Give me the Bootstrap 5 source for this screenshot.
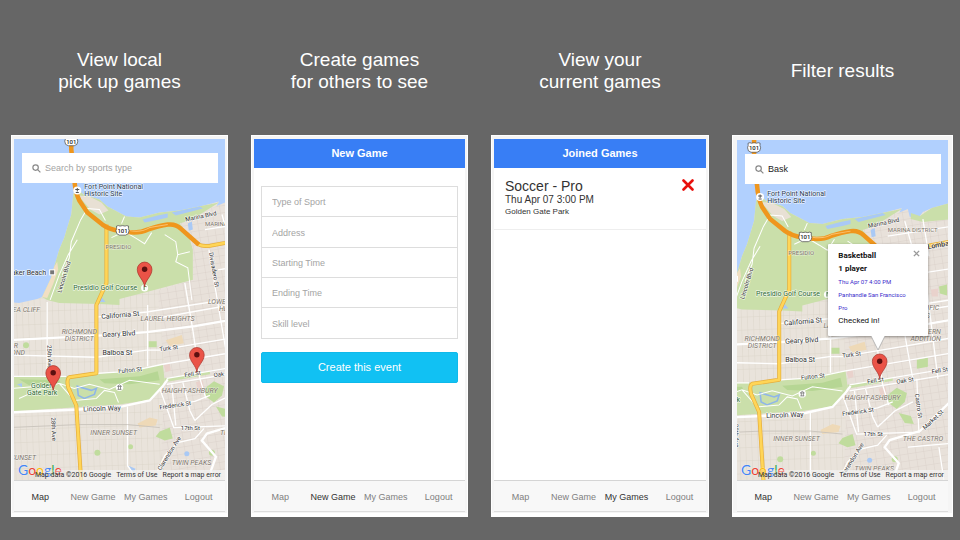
<!DOCTYPE html>
<html lang="en">
<head>
<meta charset="utf-8">
<meta name="viewport" content="width=device-width, initial-scale=1">
<title>Pick up games</title>
<link href="https://cdn.jsdelivr.net/npm/bootstrap@5.3.0/dist/css/bootstrap.min.css" rel="stylesheet">
<style>
  body { background: #666; font-family: "Liberation Sans", Arial, sans-serif; }
  a { text-decoration: none; }
  .showcase { display: grid; grid-template-columns: 217fr 217fr 218fr 221fr; gap: 0 23px; min-height: 100vh; padding: 7px 7px 23px 11px; }
  .caption { height: 128px; font-size: 19px; line-height: 22px; color: #fff; margin: 0; font-weight: 400; }
  .phone { background: #f5f5f5; border: 1px solid #fff; border-bottom-width: 4px; padding: 3px 2px 1px; }
  .phone-wide { padding: 4px; padding-bottom: 1px; }
  .screen { background: #fff; }
  .topbar { background: #387ef5; color: #fff; font-size: 11px; line-height: 29px; font-weight: 700; margin: 0; }
  .tabs { background: #f8f8f8; border-top: 1px solid #d5d5d5; border-bottom: 1px solid #ddd; height: 32px; padding-top: 3px; font-size: 9px; }
  .tabs a { color: #808080; flex: 1 1 0; text-align: center; white-space: nowrap; }
  .tabs a.current { color: #333; }
  .map-area { background: #b1d0fe; }
  .map-canvas { inset: 0; font-family: Roboto, sans-serif; }
  .search-box { top: 14px; left: 8px; right: 7px; height: 30px; background: #fff; padding: 0 10px; gap: 4px; z-index: 2; }
  .search-box input { border: 0; outline: 0; background: transparent; font-size: 9px; line-height: 12px; color: #222; padding: 0; min-width: 0; }
  ::placeholder { color: #a4a4a4 !important; opacity: 1; }
  .map-credit { right: 0; bottom: 0; left: 20px; font: 7px/10px Roboto, sans-serif; padding-right: 4px; z-index: 2; background: linear-gradient(90deg, rgba(245,245,245,0), rgba(245,245,245,.7) 50px); gap: 5px; }
  .map-credit, .map-credit a { color: #333; white-space: nowrap; }
  .g-logo { left: 4px; bottom: 2px; font: 14px/16px Lato, sans-serif; z-index: 1; text-shadow: 0 0 1px #fff; }
  .bubble { left: 67%; top: 104px; width: 100px; margin-left: -50px; background: #fff; border-radius: 1px; box-shadow: 0 1px 3px rgba(0,0,0,.4); padding: 5px 10px 9px; font: 8px/13px Roboto, sans-serif; color: #111; z-index: 3; }
  .bubble small { display: block; font-size: 6px; line-height: 13px; color: #3a2ccc; white-space: nowrap; }
  .bubble .tail { left: 43px; top: 100%; }
  .bubble button { top: 6px; right: 8px; padding: 0; border: 0; background: none; line-height: 0; }
  .game-form { padding: 18px 7px 0; }
  .fields { border: 1px solid #ddd; min-height: 153px; margin-bottom: 13px; }
  .fields input { border: 0; border-bottom: 1px solid #ddd; flex: 1 1 0; font-size: 9px; padding: 3px 10px 0; width: 100%; outline: 0; background: #fff; min-height: 30px; border-radius: 0; }
  .fields input:last-child { border-bottom: 0; }
  .btn-create { background: #11c1f3; color: #fff; font-size: 11px; line-height: 13px; padding: 8px; border: 1px solid #0fb9ea; border-radius: 2px; }
  .game { padding: 11px 11px 11px; border-bottom: 1px solid #eee; color: #333; }
  .game h3 { font-size: 14px; line-height: 15px; margin: 0; font-weight: 400; }
  .game p { font-size: 10px; line-height: 12px; margin: 0; }
  .game address { font-size: 8px; line-height: 12px; margin: 0; }
  .game button { border: 0; background: none; padding: 0; line-height: 0; }
</style>
<script src="https://cdn.jsdelivr.net/npm/bootstrap@5.3.0/dist/js/bootstrap.bundle.min.js"></script>
</head>
<body>
<svg width="0" height="0" class="position-absolute" aria-hidden="true">
  <defs>
    <pattern id="blocks" width="6" height="13" patternUnits="userSpaceOnUse" patternTransform="rotate(-2)">
      <rect width="6" height="13" fill="#e9e3db"/>
      <path d="M0 0V13M0 0H6" stroke="#d9d1c7" stroke-width=".8" fill="none"/>
    </pattern>
    <pattern id="blocksEast" width="8" height="7" patternUnits="userSpaceOnUse" patternTransform="rotate(-9)">
      <rect width="8" height="7" fill="#e8e1da"/>
      <path d="M0 0V7M0 0H8" stroke="#d9d0c8" stroke-width=".8" fill="none"/>
    </pattern>
    <g id="pin">
      <path d="M0 0C-.6-7-7.300-10.500-7.300-17.400A7.300 7.300 0 0 1 7.300-17.400C7.300-10.500 .6-7 0 0Z" fill="#ea5347" stroke="#a8332b" stroke-width=".7"/>
      <circle cy="-17.500" r="2.700" fill="#5c1010"/>
    </g>
    <g id="shield">
      <path d="M-6-4.500Q-4-5.500-2.500-4.500Q0-5.500 2.500-4.500Q4-5.500 6-4.500Q5.500-2 6.500 0Q6.500 4 3 4.500H-3Q-6.500 4-6.500 0Q-5.500-2-6-4.500Z" fill="#fff" stroke="#444" stroke-width=".7"/>
      <text y="2.300" text-anchor="middle" font-size="6" font-weight="500" fill="#222">101</text>
    </g>
    <g id="city">
      <path fill="url(#blocks)" d="M10 302L20 303L38 299L43 297L52 278L55 267L60 250L65 238L72 215L74 195L77 188L84 195L100 200L108 207L127 217L140 218L160 213L180 211L204 206L219 202L216 208L227 211L237 210L240 206L249 202L252 206L270 196V490H10Z"/>
      <path fill="url(#blocksEast)" d="M180 222L225 203L227 211L237 210L249 202L270 196V490H160L165 372L163 345L158 291L193 280V250Z"/>
      <path fill="#cadfaa" d="M48 300L43 297L52 278L55 267L60 250L65 238L72 215L74 195L77 188L84 195L100 200L108 207L127 217L140 218L160 213L180 211L204 206L219 203L192 220L180 224L189 236L193 250V280L147 292L120 299V305L100 304L60 303Z"/>
      <path fill="#e8e0d4" d="M79 196L90 197L102 203L109 211L100 215L91 210Z"/>
      <path fill="#f1dfc3" d="M43 297L52 278L55 267L58 262L59 270L54 284L48 298Z"/>
      <path fill="#cadfaa" d="M228 207L237 210L249 202L270 196V213L240 216L228 213Z"/>
      <path fill="#cadfaa" d="M10 376L67 376L97 374L130 370L163 364L165 380L161 389L152 399L120 404L10 411Z"/>
      <path fill="#cadfaa" d="M165 378L210 371V374L165 382Z"/>
      <path fill="#b6d694" d="M20 379L60 380L62 384L30 385ZM100 379L140 376L158 371L160 380L130 384L105 383Z"/>
      <g fill="#c0dc9d">
        <path d="M205 388L214 381L224 386L222 395L214 402L206 396Z"/>
        <path d="M216 406L228 409L231 417L222 416Z"/>
        <path d="M156 436L160 431L170 427L173 438L165 440Z"/>
        <path d="M149 341H157V347H149ZM234 353L245 351V360L234 362ZM256 280L264 278V289L257 287Z"/>
        <circle cx="98" cy="452" r="3"/><circle cx="131" cy="446" r="2.500"/><circle cx="27" cy="345" r="3"/><circle cx="212" cy="452" r="3"/>
      </g>
      <path fill="#eed9b7" d="M138 423L150 417L158 419L156 425L140 427ZM166 340L182 335L184 343L170 346Z"/>
      <path fill="#e9d2cc" d="M196 382L203 380L204 388L198 389ZM248 283L255 282V290L249 290ZM164 365L170 363L171 370L166 372Z"/>
      <g fill="#a9c9f5">
        <path d="M143 220L158 216L168 214V218L160 220L145 223ZM188 224L192 222L193 230L189 231ZM172 213L200 207L203 209L176 216ZM100 302L102 297L106 302ZM18 384L23 383V387Z"/>
        <circle cx="187" cy="453" r="2.500"/>
        <path d="M129 465L136 468L134 472Z"/>
      </g>
      <path d="M78 386L92 390L97 388L95 394L85 398L79 395Z" fill="none" stroke="#8fb6e8" stroke-width="1.600"/>
      <!-- park trails and minor roads -->
      <g fill="none" stroke="#fff" stroke-width="1">
        <path d="M78 240L69 255L60 275L51 300M81 221L72 242L70 258L63 275M81 221L88 209L100 210L106 221M112 238L125 232L137 239L145 244L152 233M125 217L122 224M165 235L176 242L178 255L190 252M178 255L176 262L188 268L192 300"/>
        <path d="M20 398L38 390L60 383L75 388L90 384L110 389L130 380L160 384M15 388L40 386M97 398L105 390L115 392L119 402M60 383L75 400L97 398"/>
      </g>
      <g fill="none" stroke="#fff" stroke-width="1.300">
        <path d="M97 317L147 312L270 293M147 320L225 306L270 299M15 355L97 357L147 350L160 350L225 339L270 331M15 376L67 376M97 373L130 371L163 364L270 346M167 378L270 361M167 384L270 367"/>
        <path d="M48 302V374M148 305V366M185 283L193 330L200 378L206 398M209 250L216 292L225 345L230 372M240 250L255 372M128 406V465L140 482M160 388L174 427L237 425M172 384L176 425M183 382L190 410L195 420M160 407L195 401L210 395M195 420L212 404L230 395M234 372L236 425"/>
        <path d="M158 470L165 455L178 442L195 438L204 428M218 270L270 262M205 230L270 220M222 215L232 250M240 213L246 250M256 440L262 480M225 440L270 436"/>
      </g>
      <path d="M10 427L80 424L128 424L160 427" fill="none" stroke="#c9c3bb" stroke-width=".9"/>
      <g fill="none" stroke="#fff" stroke-width="2.300">
        <path d="M10 340L107 335L147 332L195 326L270 313M10 412L80 409L123 406L150 400L163 386L168 379"/>
        <path d="M270 392L237 424L207 433L202 440L216 456L211 470L216 484"/>
      </g>
      <g fill="none" stroke-linejoin="round">
        <path d="M107 225V283L97 305V373L70 377Q67 379 69 387L77 405L80 452L82 484M198 244Q201 247 210 246L270 235" stroke="#e6ae3c" stroke-width="4"/>
        <path d="M107 225V283L97 305V373L70 377Q67 379 69 387L77 405L80 452L82 484M198 244Q201 247 210 246L270 235" stroke="#ffd557" stroke-width="2.600"/>
        <path d="M72 130V150L75 180Q76 193 80 201L88 213L103 225Q110 230 120 231Q138 235 148 230Q160 226 168 225Q176 224 181 229L199 245" stroke="#ef961d" stroke-width="4.500"/>
        <path d="M130 231Q142 233 150 228L168 225" stroke="#fbc170" stroke-width="1"/>
      </g>
      <use href="#shield" x="72" y="142"/>
      <use href="#shield" x="123" y="231"/>
      <circle cx="78" cy="191" r="4" fill="#fff"/><path d="M76 190H80M76.500 193H79.500M78 188.500V192" stroke="#555" stroke-width="1"/>
      <rect x="50.500" y="270" width="5" height="5" fill="#777" stroke="#fff"/>
      <circle cx="145" cy="288" r="3.500" fill="#fff"/><path d="M144.500 290V286L147 287" stroke="#5a8d55" stroke-width="1" fill="none"/>
      <circle cx="120" cy="387" r="3.700" fill="#fff"/><path d="M118 389H122M118 386H122L120 384.500ZM119 386V389M121 386V389" stroke="#666" stroke-width=".7" fill="none"/>
      <g font-size="6" fill="#333" stroke="#fff" stroke-width="1.400" stroke-opacity=".7" stroke-linejoin="round" paint-order="stroke">
        <g font-size="7" fill="#2d3d55"><text x="85" y="190">Fort Point National</text><text x="85" y="197">Historic Site</text></g>
        <text x="47" y="275" text-anchor="end" font-size="7">Baker Beach</text>
        <text x="74" y="290" font-size="7" fill="#2f6b35">Presidio Golf Course</text>
        <g font-size="7" fill="#2f6b35" text-anchor="middle"><text x="43" y="388">Golden</text><text x="43" y="395">Gate Park</text></g>
        <text transform="translate(186 222) rotate(-12)">Marina Blvd</text>
        <text transform="translate(245 243) rotate(-10)" font-weight="500" font-size="7">Lombard St</text>
        <text transform="translate(62 293) rotate(-73)">Lincoln Blvd</text>
        <text transform="translate(102 319) rotate(-5)" font-size="7">California St</text>
        <text transform="translate(103 337) rotate(-3)" font-size="7">Geary Blvd</text>
        <text transform="translate(103 355)" font-size="7">Balboa St</text>
        <text transform="translate(160 351) rotate(-7)">Turk St</text>
        <text transform="translate(119 373) rotate(-6)">Fulton St</text>
        <text transform="translate(185 377) rotate(-9)">Fell St</text>
        <text transform="translate(214 377) rotate(-9)">Oak St</text>
        <text transform="translate(249 367) rotate(-9)">Fell St</text>
        <text transform="translate(209 253) rotate(80)">Divisadero St</text>
        <text transform="translate(48 345) rotate(88)">25th Ave</text>
        <text transform="translate(52 417) rotate(88)">28th Ave</text>
        <text transform="translate(84 411) rotate(-2)" font-size="7">Lincoln Way</text>
        <text transform="translate(160 409) rotate(-8)">Frederick St</text>
        <text x="181" y="429">17th St</text>
        <text transform="translate(161 470) rotate(-58)">Clarendon Ave</text>
        <text transform="translate(232 387) rotate(82)">Castro St</text>
        <text transform="translate(242 423) rotate(-43)">Market St</text>
      </g>
      <g font-size="6" fill="#7d756b" stroke="#fff" stroke-width="1" stroke-opacity=".5" paint-order="stroke">
        <text x="205" y="226">MARINA DISTRICT</text><text x="106" y="249">PRESIDIO</text>
        <g font-style="italic" font-size="7">
          <text x="41" y="312" text-anchor="end">SEA CLIFF</text>
          <text x="80" y="334" text-anchor="middle">RICHMOND</text><text x="80" y="341" text-anchor="middle">DISTRICT</text>
          <text x="141" y="321">LAUREL HEIGHTS</text>
          <text x="208" y="304">LOWER PACIFIC</text><text x="219" y="311">HEIGHTS</text>
          <text x="258" y="327" text-anchor="end">WESTERN</text><text x="258" y="334" text-anchor="end">ADDITION</text>
          <text x="19" y="348" text-anchor="end">OUTER</text><text x="26" y="355" text-anchor="end">RICHMOND</text>
          <text x="162" y="393">HAIGHT-ASHBURY</text><text x="91" y="434">INNER SUNSET</text>
          <text x="37" y="459" text-anchor="end">OUTER SUNSET</text>
          <text x="172" y="464">TWIN PEAKS</text><text x="220" y="434">THE CASTRO</text>
        </g>
      </g>
    </g>
    <g id="cross"><path d="M1.500 1.500L10.500 10.500M10.500 1.500L1.500 10.500"/></g>
  </defs>
</svg>

<main class="showcase">
  <section class="d-flex flex-column">
    <h2 class="caption d-flex align-items-center justify-content-center text-center">View local<br>pick up games</h2>
    <div class="phone d-flex flex-column flex-grow-1">
      <div class="map-area position-relative flex-grow-1 overflow-hidden">
        <svg class="map-canvas position-absolute w-100 h-100" viewBox="15 139 210 341" preserveAspectRatio="xMidYMid slice" role="img" aria-label="Map of San Francisco">
          <use href="#city"/>
          <use href="#pin" x="145" y="287"/><use href="#pin" x="197" y="372"/><use href="#pin" x="54" y="390"/>
        </svg>
        <label class="search-box position-absolute d-flex align-items-center">
          <svg width="9" height="9" viewBox="0 0 9 9" fill="none" stroke="#888" stroke-width="1.200"><circle cx="3.600" cy="3.600" r="2.700"/><path d="M5.600 5.600L8.400 8.400"/></svg>
          <input class="flex-grow-1" type="search" placeholder="Search by sports type" aria-label="Search">
        </label>
        <div class="g-logo position-absolute"><span style="color:#4285f4">G</span><span style="color:#ea4335">o</span><span style="color:#fbbc05">o</span><span style="color:#4285f4">g</span><span style="color:#34a853">l</span><span style="color:#ea4335">e</span></div>
        <div class="map-credit position-absolute d-flex justify-content-end"><span>Map data ©2016 Google</span><a href="#">Terms of Use</a><a href="#">Report a map error</a></div>
      </div>
      <nav class="tabs d-flex align-items-center"><a class="current" href="#">Map</a><a href="#">New Game</a><a href="#">My Games</a><a href="#">Logout</a></nav>
    </div>
  </section>

  <section class="d-flex flex-column">
    <h2 class="caption d-flex align-items-center justify-content-center text-center">Create games<br>for others to see</h2>
    <div class="phone d-flex flex-column flex-grow-1">
      <div class="screen flex-grow-1">
        <h3 class="topbar text-center">New Game</h3>
        <form class="game-form">
          <div class="fields d-flex flex-column">
            <input type="text" placeholder="Type of Sport" aria-label="Type of Sport">
            <input type="text" placeholder="Address" aria-label="Address">
            <input type="text" placeholder="Starting Time" aria-label="Starting Time">
            <input type="text" placeholder="Ending Time" aria-label="Ending Time">
            <input type="text" placeholder="Skill level" aria-label="Skill level">
          </div>
          <button type="button" class="btn btn-create w-100">Create this event</button>
        </form>
      </div>
      <nav class="tabs d-flex align-items-center"><a href="#">Map</a><a class="current" href="#">New Game</a><a href="#">My Games</a><a href="#">Logout</a></nav>
    </div>
  </section>

  <section class="d-flex flex-column">
    <h2 class="caption d-flex align-items-center justify-content-center text-center">View your<br>current games</h2>
    <div class="phone d-flex flex-column flex-grow-1">
      <div class="screen flex-grow-1">
        <h3 class="topbar text-center">Joined Games</h3>
        <article class="game d-flex justify-content-between align-items-start">
          <div>
            <h3>Soccer - Pro</h3>
            <p>Thu Apr 07 3:00 PM</p>
            <address>Golden Gate Park</address>
          </div>
          <button type="button" aria-label="Leave game"><svg width="14" height="12" viewBox="-1 0 14 12" stroke="#e8100c" stroke-width="2.600" stroke-linecap="round"><use href="#cross"/></svg></button>
        </article>
      </div>
      <nav class="tabs d-flex align-items-center"><a href="#">Map</a><a href="#">New Game</a><a class="current" href="#">My Games</a><a href="#">Logout</a></nav>
    </div>
  </section>

  <section class="d-flex flex-column">
    <h2 class="caption d-flex align-items-center justify-content-center text-center">Filter results</h2>
    <div class="phone phone-wide d-flex flex-column flex-grow-1">
      <div class="map-area position-relative flex-grow-1 overflow-hidden">
        <svg class="map-canvas position-absolute w-100 h-100" viewBox="55 133 210 341" preserveAspectRatio="xMidYMid slice" role="img" aria-label="Map of San Francisco">
          <use href="#city"/>
          <use href="#pin" x="197" y="372"/>
        </svg>
        <label class="search-box position-absolute d-flex align-items-center">
          <svg width="9" height="9" viewBox="0 0 9 9" fill="none" stroke="#888" stroke-width="1.200"><circle cx="3.600" cy="3.600" r="2.700"/><path d="M5.600 5.600L8.400 8.400"/></svg>
          <input class="flex-grow-1" type="search" value="Bask" aria-label="Search">
        </label>
        <div class="bubble position-absolute">
          <button type="button" class="position-absolute" aria-label="Close"><svg width="7" height="7" viewBox="0 0 12 12" stroke="#999" stroke-width="2.400"><use href="#cross"/></svg></button>
          <strong class="d-block">Basketball</strong>
          <strong class="d-block">1 player</strong>
          <small>Thu Apr 07 4:00 PM</small>
          <small>Panhandle San Francisco</small>
          <small>Pro</small>
          <span>Checked in!</span>
          <svg class="tail position-absolute" width="14" height="15" viewBox="0 0 14 15"><path d="M0 0L7 14L14 0" fill="#fff" stroke="#aaa" stroke-width=".8"/></svg>
        </div>
        <div class="g-logo position-absolute"><span style="color:#4285f4">G</span><span style="color:#ea4335">o</span><span style="color:#fbbc05">o</span><span style="color:#4285f4">g</span><span style="color:#34a853">l</span><span style="color:#ea4335">e</span></div>
        <div class="map-credit position-absolute d-flex justify-content-end"><span>Map data ©2016 Google</span><a href="#">Terms of Use</a><a href="#">Report a map error</a></div>
      </div>
      <nav class="tabs d-flex align-items-center"><a class="current" href="#">Map</a><a href="#">New Game</a><a href="#">My Games</a><a href="#">Logout</a></nav>
    </div>
  </section>
</main>
</body>
</html>
